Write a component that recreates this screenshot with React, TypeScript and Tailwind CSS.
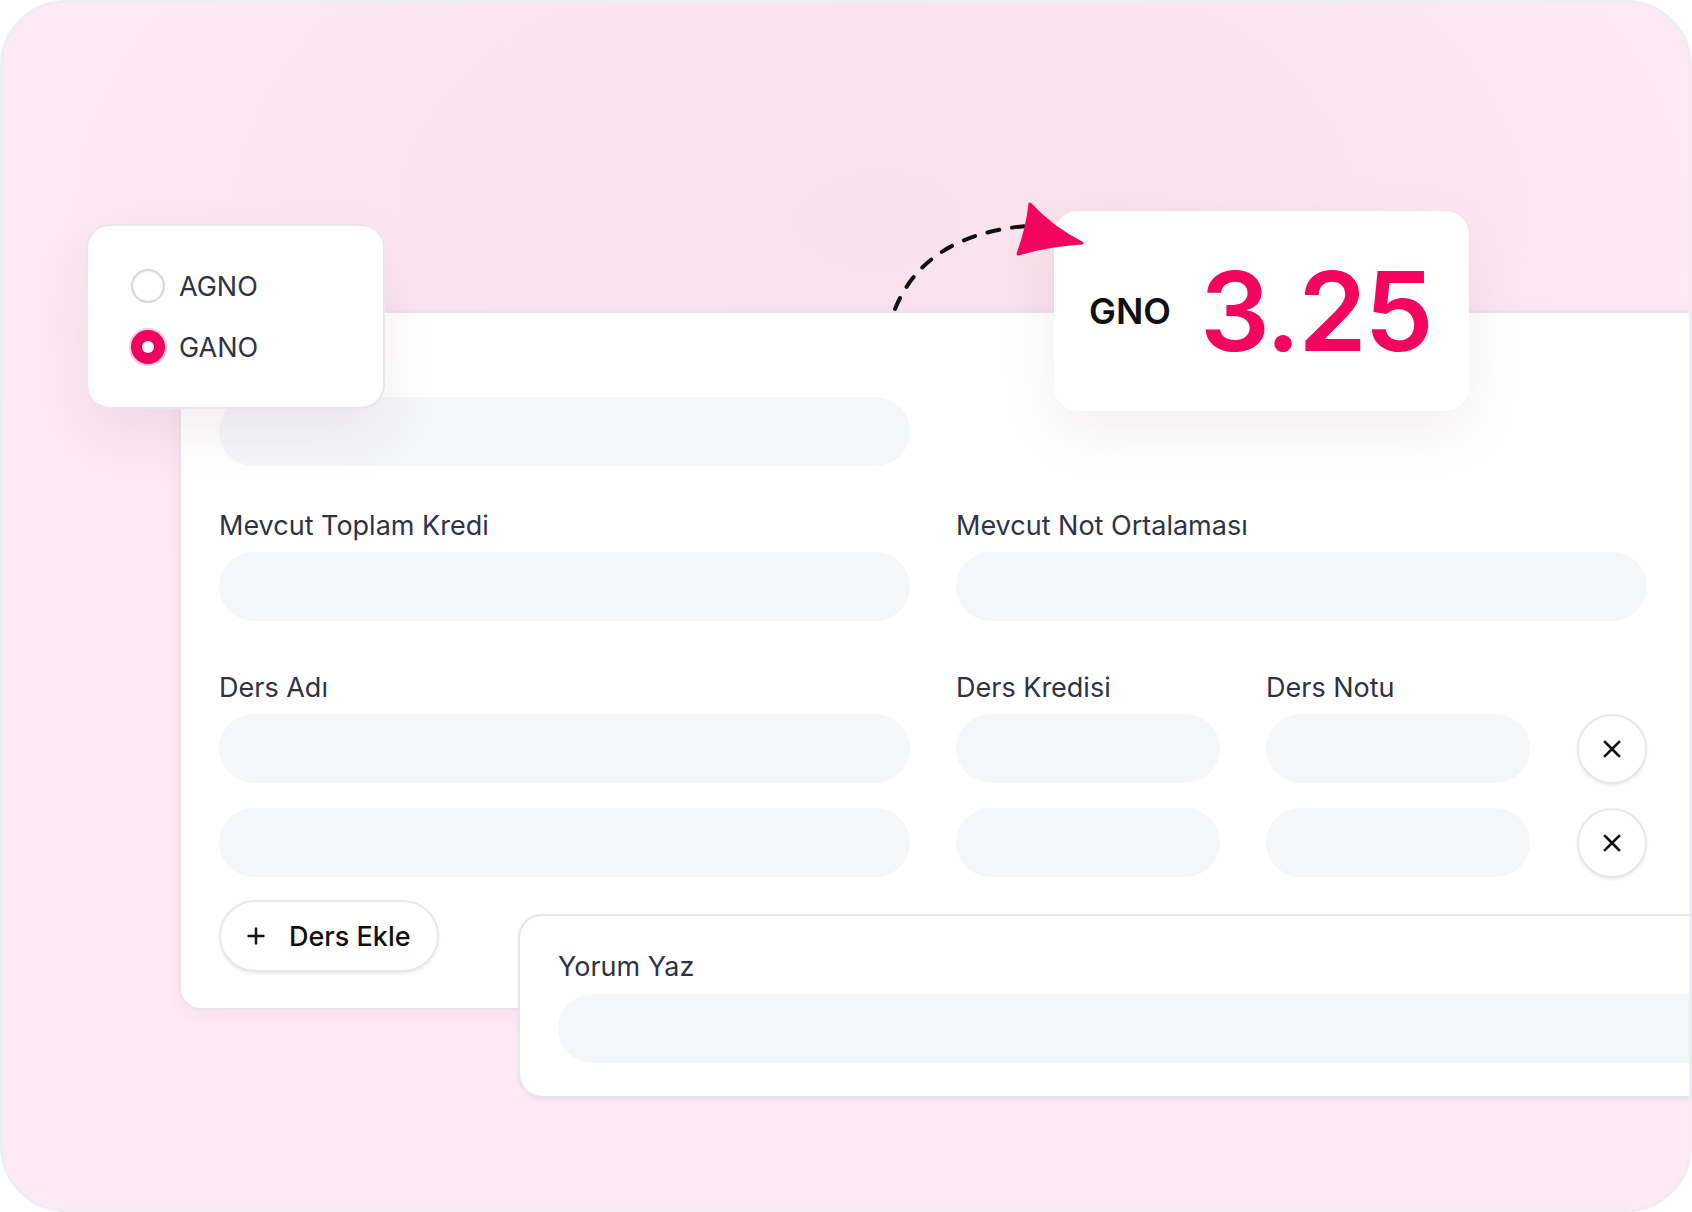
import React from "react";

function Field({ className = "" }: { className?: string }) {
  return <div className={"h-[69px] rounded-full bg-[#f5f6f8] " + className} />;
}

function Label({ children }: { children: React.ReactNode }) {
  return (
    <div className="mb-[10px] h-[32px] text-[27px] leading-[32px] text-[#2f3244]">
      {children}
    </div>
  );
}

function CloseButton() {
  return (
    <div className="flex h-[70px] w-[70px] items-center justify-center rounded-full border-2 border-[#e6e8ee] bg-white shadow-[0_2px_3px_rgba(30,40,80,0.08)]">
      <svg width="18" height="18" viewBox="0 0 18 18" fill="none">
        <path d="M2 2L16 16M16 2L2 16" stroke="#111" strokeWidth="2.6" strokeLinecap="square" />
      </svg>
    </div>
  );
}

export default function App() {
  return (
    <div className="min-h-screen bg-white font-['Inter','Noto_Sans',sans-serif]">
      <div className="relative h-[1212px] w-[1692px] overflow-hidden rounded-[66px] border-[3px] border-[#eceef3] bg-[radial-gradient(ellipse_55%_45%_at_52%_18%,#f8e1ea_0%,#fbe6ef_55%,#fdeaf3_100%)]">
        {/* Main card */}
        <div className="ml-[176px] mt-[308px] w-[1560px] rounded-[22px] border-2 border-[#ebe2ea] bg-white pb-[36px] pl-[38px] pt-[84px] shadow-[0_4px_20px_rgba(120,60,100,0.05)]">
          <Field className="w-[691px]" />

          <div className="mt-[44px] grid grid-cols-[691px_691px] gap-x-[46px]">
            <div>
              <Label>Mevcut Toplam Kredi</Label>
              <Field />
            </div>
            <div>
              <Label>Mevcut Not Ortalaması</Label>
              <Field />
            </div>
          </div>

          <div className="mt-[51px] grid grid-cols-[691px_264px_264px_71px] gap-x-[46px] gap-y-[24px]">
            <div className="-mb-[24px]">
              <Label>Ders Adı</Label>
            </div>
            <div className="-mb-[24px]">
              <Label>Ders Kredisi</Label>
            </div>
            <div className="-mb-[24px]">
              <Label>Ders Notu</Label>
            </div>
            <div />

            <Field />
            <Field />
            <Field />
            <div className="flex items-center justify-end">
              <CloseButton />
            </div>

            <Field />
            <Field />
            <Field />
            <div className="flex items-center justify-end">
              <CloseButton />
            </div>
          </div>

          <div className="mt-[22px] flex h-[72px] w-[220px] items-center rounded-full border-2 border-[#e6e8ee] bg-white pl-[26px] shadow-[0_2px_3px_rgba(30,40,80,0.08)]">
            <svg width="18" height="18" viewBox="0 0 18 18" fill="none">
              <path d="M9 0.5V17.5M0.5 9H17.5" stroke="#111" strokeWidth="2.4" />
            </svg>
            <span className="ml-[24px] text-[27px] font-medium leading-none text-[#111]">Ders Ekle</span>
          </div>
        </div>

        {/* Radio card */}
        <div className="absolute left-[83px] top-[221px] flex h-[185px] w-[299px] flex-col justify-center gap-[27px] rounded-[24px] border-2 border-[#ece5ee] bg-white pl-[43px] shadow-[0_24px_60px_rgba(90,40,70,0.08)]">
          <div className="flex h-[34px] items-center">
            <div className="h-[34px] w-[34px] rounded-full border-2 border-[#d5d8e0] bg-white shadow-[inset_0_1px_2px_rgba(0,0,0,0.04)]" />
            <span className="ml-[14px] text-[27px] leading-none text-[#2f3244]">AGNO</span>
          </div>
          <div className="flex h-[34px] items-center">
            <div className="flex h-[34px] w-[34px] items-center justify-center rounded-full bg-[#f2005f] shadow-[0_0_0_2px_rgba(242,0,95,0.22)]">
              <div className="h-[12px] w-[12px] rounded-full bg-white" />
            </div>
            <span className="ml-[14px] text-[27px] leading-none text-[#2f3244]">GANO</span>
          </div>
        </div>

        {/* GNO card */}
        <div className="absolute left-[1051px] top-[208px] flex h-[200px] w-[415px] items-center gap-[29px] rounded-[24px] bg-white pl-[35px] shadow-[0_20px_60px_rgba(90,40,70,0.08)]">
          <span className="text-[36px] font-semibold leading-none text-[#111]">GNO</span>
          <span className="text-[110px] font-semibold leading-none tracking-[-0.02em] text-[#f4045f]">3.25</span>
        </div>

        {/* Arrow */}
        <svg className="absolute left-[877px] top-[192px]" width="210" height="120" viewBox="0 0 210 120" fill="none">
          <path d="M15 114 Q45 40 146 31" stroke="#111" strokeWidth="4" strokeLinecap="round" strokeDasharray="12 13" />
          <path d="M150 9 Q172 33 202 48 Q168 50 138 59 Q147 35 150 9 Z" fill="#f4045f" stroke="#f4045f" strokeWidth="3" strokeLinejoin="round" />
        </svg>

        {/* Yorum card */}
        <div className="absolute left-[515px] top-[911px] h-[184px] w-[1300px] rounded-[24px] border-2 border-[#e7e4ec] bg-white pl-[38px] pt-[35px] shadow-[0_2px_4px_rgba(90,40,70,0.06)]">
          <div className="mb-[11px] h-[32px] text-[27px] leading-[32px] text-[#2f3244]">Yorum Yaz</div>
          <Field className="w-[1300px]" />
        </div>
      </div>
    </div>
  );
}
